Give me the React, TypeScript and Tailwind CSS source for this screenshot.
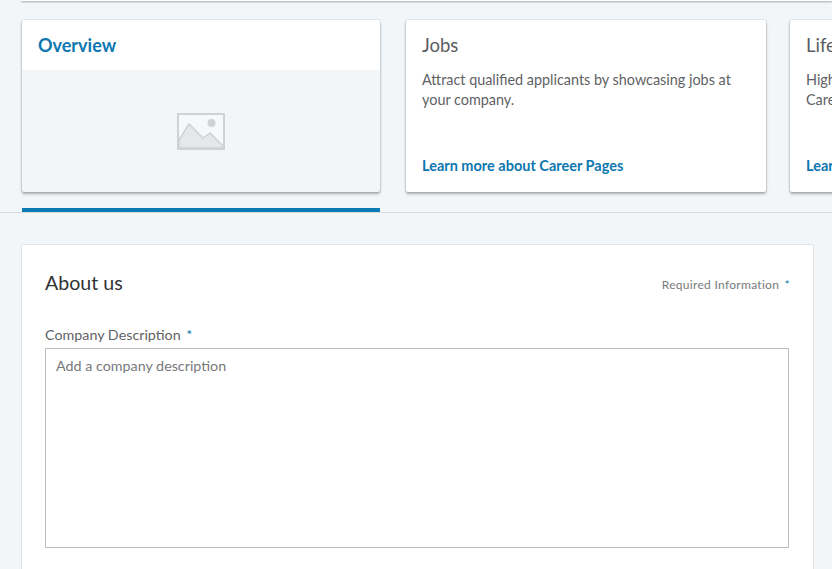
import { ReactNode } from "react";

function ImagePlaceholder() {
  return (
    <svg width="48" height="37" viewBox="0 0 48 37" aria-hidden="true">
      <rect x="1" y="1" width="46" height="35" fill="#f7f8fa" stroke="#cfd1d3" strokeWidth="2" />
      <path d="M2 27 L12 11 L26 25 L33 20 L46 33 L46 35 L2 35 Z" fill="#e6e7e9" stroke="#cfd1d3" strokeWidth="1.5" />
      <circle cx="34.500" cy="10" r="4" fill="#cfd1d3" />
    </svg>
  );
}

function Card({ title, children, width }: { title: string; children: ReactNode; width: string }) {
  return (
    <div className={`${width} h-[172px] shrink-0 bg-white rounded-[2px] shadow-[0_0_0_1px_rgba(0,0,0,0.06),0_2px_3px_rgba(0,0,0,0.3)] flex flex-col px-4`}>
      <h3 className="mt-[13px] text-[18.5px] leading-[24px] text-[#5a5d60] whitespace-nowrap">{title}</h3>
      {children}
    </div>
  );
}

export default function App() {
  return (
    <div className="h-[569px] w-[832px] overflow-hidden bg-[#f3f6f9] font-['Lato','Noto_Sans',sans-serif]">
      {/* Top strip */}
      <div className="ml-[21px] h-px bg-white shadow-[0_1px_2px_rgba(0,0,0,0.45)]" />

      {/* Tab cards */}
      <div className="relative h-[212px] border-b border-[#d9dcde]">
        <div className="flex gap-[26px] pl-[22px] pt-[19px]">
          <div className="w-[358px] h-[172px] shrink-0 bg-[#f3f6f9] rounded-[2px] shadow-[0_0_0_1px_rgba(0,0,0,0.06),0_2px_3px_rgba(0,0,0,0.3)] flex flex-col overflow-hidden">
            <div className="h-[50px] shrink-0 bg-white pl-4 pt-[13px] text-[18px] leading-[24px] font-bold text-[#0d77b0]">Overview</div>
            <div className="flex-1 flex items-center justify-center pt-[1px]">
              <ImagePlaceholder />
            </div>
          </div>
          <Card title="Jobs" width="w-[360px]">
            <p className="mt-[13px] text-[14.4px] leading-[20px] text-[#5f6265]">
              Attract qualified applicants by showcasing jobs at your company.
            </p>
            <a className="mt-auto mb-4 text-[14.5px] leading-[20px] font-bold text-[#0d77b0] whitespace-nowrap">Learn more about Career Pages</a>
          </Card>
          <Card title="Life" width="w-[360px] -ml-[2px]">
            <p className="mt-[13px] text-[14.4px] leading-[20px] text-[#5f6265]">
              Highlight your company culture on your
              <br />
              Career Pages with photos and videos.
            </p>
            <a className="mt-auto mb-4 text-[14.5px] leading-[20px] font-bold text-[#0d77b0] whitespace-nowrap">Learn more about Career Pages</a>
          </Card>
        </div>
        <div className="absolute left-[22px] bottom-0 w-[358px] h-[4px] bg-[#0a7ab5]" />
      </div>

      {/* About us */}
      <section className="ml-[21px] mt-[31px] w-[793px] h-[400px] bg-white border border-[#e1e3e5] rounded-[2px] px-[23px]">
        <div className="flex items-start justify-between pt-[24px]">
          <h2 className="text-[19.6px] leading-[28px] text-[#2f3235]">About us</h2>
          <p className="mt-[7px] text-[12px] leading-[18px] text-[#77797c] tracking-[0.3px]">
            Required Information <span className="ml-[2px] text-[#0d77b0]">*</span>
          </p>
        </div>
        <label className="block mt-[28px] text-[14.3px] leading-[20px] text-[#5f6265]">
          Company Description <span className="ml-[2px] text-[#0d77b0]">*</span>
        </label>
        <textarea
          className="block mt-[3px] w-[744px] h-[200px] resize-none border border-[#bcbec0] bg-white px-[10px] py-[7px] text-[14.3px] leading-[20px] placeholder:text-[#77797c] outline-none"
          placeholder="Add a company description"
        />
      </section>
    </div>
  );
}
